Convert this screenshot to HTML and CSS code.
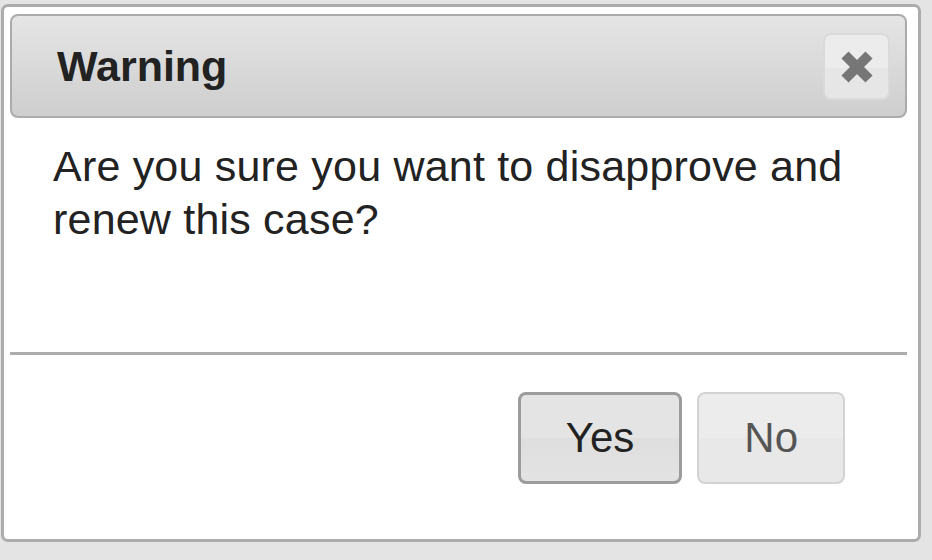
FILE: index.html
```html
<!DOCTYPE html>
<html>
<head>
<meta charset="utf-8">
<link rel="stylesheet" href="styles.css">
</head>
<body>
<div class="dialog">
  <div class="titlebar">
    <span class="title">Warning</span>
    <button class="close" aria-label="close">
      <svg width="34" height="34" viewBox="0 0 34 34"><path d="M5 5 L29 29 M29 5 L5 29" stroke="#767676" stroke-width="10" stroke-linecap="butt" fill="none"/></svg>
    </button>
  </div>
  <div class="content">Are you sure you want to disapprove and renew this case?</div>
  <div class="buttonpane">
    <button class="btn btn-active">Yes</button>
    <button class="btn">No</button>
  </div>
</div>
</body>
</html>
```
FILE: styles.css
```css
html, body {
  margin: 0;
  padding: 0;
  background: #e4e4e4;
}
body {
  font-family: "Liberation Sans", Arial, sans-serif;
  color: #222;
}
.dialog {
  box-sizing: border-box;
  margin: 4px 0 0 1px;
  width: 920px;
  height: 538px;
  background: #fff;
  border: 3px solid #acacac;
  border-radius: 7px;
  padding: 7px 11px 0 6px;
}
.titlebar {
  box-sizing: border-box;
  height: 104px;
  border: 2px solid #ababab;
  border-radius: 8px;
  background: linear-gradient(#e5e5e5, #cecece);
  display: flex;
  align-items: center;
  justify-content: space-between;
  padding: 0 15px 0 45px;
}
.title {
  font-weight: bold;
  font-size: 43px;
  color: #222;
}
.close {
  box-sizing: border-box;
  width: 67px;
  height: 67px;
  border: 2px solid #dadada;
  border-radius: 8px;
  background: linear-gradient(#ececec 0%, #ececec 52%, #e6e6e6 52%, #e6e6e6 100%);
  display: flex;
  align-items: center;
  justify-content: center;
  padding: 0;
  margin-top: 1px;
}
.content {
  box-sizing: border-box;
  height: 234px;
  padding: 22px 40px 0 43px;
  font-size: 43px;
  line-height: 53px;
  letter-spacing: 0.2px;
  color: #222;
}
.buttonpane {
  border-top: 3px solid #adadad;
  padding: 37px 62px 0 0;
  display: flex;
  justify-content: flex-end;
  gap: 15px;
}
.btn {
  box-sizing: border-box;
  height: 92px;
  padding: 0 45px;
  font-family: "Liberation Sans", Arial, sans-serif;
  font-size: 42px;
  color: #555;
  border: 2px solid #d3d3d3;
  border-radius: 8px;
  background: linear-gradient(#ececec 0%, #ececec 50%, #e8e8e8 50%, #e8e8e8 100%);
}
.btn-active {
  color: #222;
  border: 3px solid #9c9c9c;
  background: linear-gradient(#e4e4e4 0%, #e4e4e4 50%, #dedede 50%, #e3e3e3 100%);
}
```
